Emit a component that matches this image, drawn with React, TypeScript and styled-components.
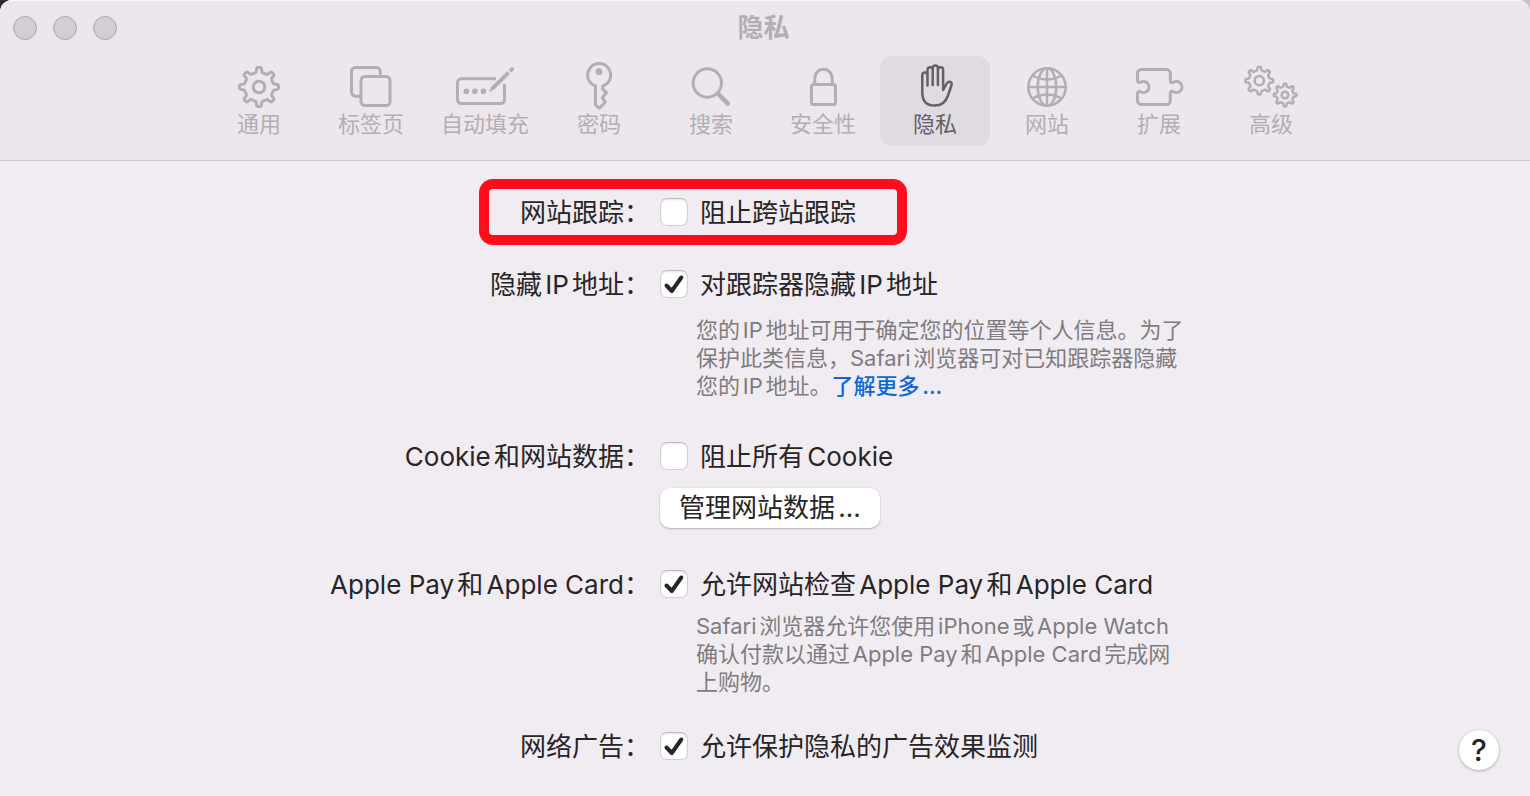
import React from "react";
import styled, { createGlobalStyle } from "styled-components";

const colors = {
  header: "#ece7ed",
  body: "#f1ecf2",
  line: "#cbc7cc",
  dim: "#b3aeb4",
  active: "#636066",
  activeBg: "#dfdbe0",
  text: "#262527",
  note: "#7f7c80",
  link: "#0a68da",
  mark: "#ff0d1b",
};

const GlobalStyle = createGlobalStyle`
  *, *::before, *::after { box-sizing: border-box; }
  body {
    margin: 0;
    background: linear-gradient(90deg, #2b2a2c 20px, #c4c2c5 20px);
    color: ${colors.text};
    font-family: Inter, "Noto Sans CJK SC", sans-serif;
    font-size: 26px;
    line-height: 34px;
    text-autospace: normal;
  }
  button { font: inherit; color: inherit; border: 0; padding: 0; cursor: pointer; }
`;

const Window = styled.div`
  display: flex;
  flex-direction: column;
  min-height: 100vh;
  overflow: hidden;
  border-radius: 12px 12px 0 0;
  background: ${colors.body};
`;

const Header = styled.header`
  display: flex;
  flex-direction: column;
  background: ${colors.header};
  border-bottom: 1px solid ${colors.line};
  box-shadow: inset 0 1px 0 #faf8fa;
  padding-bottom: 14px;
`;

const TitleBar = styled.div`
  display: grid;
  grid-template-columns: 1fr auto 1fr;
  align-items: center;
  height: 56px;
  padding: 0 16px 0 13px;
`;

const Lights = styled.div`
  display: flex;
  gap: 16px;
`;

const Light = styled.button`
  width: 24px;
  height: 24px;
  border: 1px solid #aaa6ab;
  border-radius: 50%;
  background: #d3ced4;
`;

const Title = styled.h1`
  margin: 0;
  font-size: 26px;
  line-height: 32px;
  font-weight: 700;
  color: ${colors.dim};
`;

const Toolbar = styled.nav`
  display: flex;
  justify-content: center;
  gap: 2px;
`;

const Tab = styled.button<{ $active?: boolean; $wide?: boolean }>`
  display: flex;
  flex-direction: column;
  align-items: center;
  width: ${(p) => (p.$wide ? 114 : 110)}px;
  height: 90px;
  padding-top: 4px;
  border-radius: 12px;
  background: ${(p) => (p.$active ? colors.activeBg : "transparent")};
  color: ${(p) => (p.$active ? colors.active : colors.dim)};
`;

const TabLabel = styled.span`
  font-size: 22px;
  line-height: 24px;
`;

const Icon = styled.svg<{ $thin?: boolean }>`
  flex: none;
  width: 60px;
  height: 52px;
  fill: none;
  stroke: currentColor;
  stroke-width: ${(p) => (p.$thin ? 2.5 : 3)};
  stroke-linejoin: round;
  stroke-linecap: round;

  .solid { fill: currentColor; stroke: none; }
`;

const Main = styled.main`
  flex: 1;
  display: grid;
  padding: 35px 31px 26px;
`;

const Form = styled.form`
  grid-area: 1 / 1;
  justify-self: center;
  display: flex;
  flex-direction: column;
`;

const Row = styled.div<{ $gap?: number }>`
  position: relative;
  display: grid;
  grid-template-columns: 320px 540px;
  column-gap: 10px;
  margin-top: ${(p) => p.$gap ?? 0}px;
`;

const RowLabel = styled.span`
  text-align: right;
  white-space: nowrap;
`;

const Check = styled.label`
  display: flex;
  align-items: flex-start;
  gap: 12px;
  white-space: nowrap;
`;

const BoxWrap = styled.span`
  display: grid;
  padding-top: 2px;

  > * { grid-area: 1 / 1; }
`;

const Box = styled.input`
  appearance: none;
  width: 28px;
  height: 28px;
  margin: 0;
  border: 1px solid #d3cfd4;
  border-top-color: #bfbbc0;
  border-radius: 7px;
  background: #fff;
  box-shadow: inset 0 1px 2px #e6e4e7;
`;

const Tick = styled.svg`
  z-index: 1;
  width: 28px;
  height: 28px;
  fill: none;
  stroke: ${colors.text};
  stroke-width: 4px;
  stroke-linecap: round;
  stroke-linejoin: round;
  pointer-events: none;
  visibility: hidden;

  input:checked + & { visibility: visible; }
`;

const Note = styled.p<{ $gap: number }>`
  margin: ${(p) => p.$gap}px 0 0 36px;
  font-size: 22px;
  line-height: 28px;
  color: ${colors.note};
  white-space: nowrap;
`;

const Link = styled.a`
  color: ${colors.link};
  font-weight: 500;
  text-decoration: none;
`;

const PushButton = styled.button`
  height: 40px;
  margin-top: 14px;
  padding: 0 19px;
  border-radius: 10px;
  background: #fff;
  box-shadow: 0 1px 2px #b5b1b6, 0 0 1px #c9c5ca;
  line-height: 38px;
`;

const Highlight = styled.div`
  position: absolute;
  left: 149px;
  top: -17px;
  width: 428px;
  height: 66px;
  border: 10px solid ${colors.mark};
  border-radius: 14px;
  pointer-events: none;
`;

const Help = styled.button`
  grid-area: 1 / 1;
  place-self: end;
  width: 40px;
  height: 40px;
  border-radius: 50%;
  background: #fff;
  box-shadow: 0 1px 3px #b0acb1, 0 0 1px #c9c5ca;
  font-size: 30px;
  line-height: 40px;
  font-weight: 500;
`;

function gearPath(cx: number, cy: number, outer: number, inner: number, teeth: number) {
  const pitch = (Math.PI * 2) / teeth;
  const at = (r: number, turn: number) => {
    const a = turn * pitch;
    return `${(cx + r * Math.sin(a)).toFixed(2)} ${(cy - r * Math.cos(a)).toFixed(2)}`;
  };
  const round = (outer - inner) * 0.45;
  let d = `M${at(inner + round, -0.2)}`;
  for (let i = 0; i < teeth; i++) {
    d += `Q${at(outer, i - 0.17)} ${at(outer, i - 0.08)}L${at(outer, i + 0.08)}`;
    d += `Q${at(outer, i + 0.17)} ${at(inner + round, i + 0.2)}`;
    d += `Q${at(inner, i + 0.24)} ${at(inner, i + 0.36)}`;
    d += `L${at(inner, i + 0.64)}Q${at(inner, i + 0.76)} ${at(inner + round, i + 0.8)}`;
  }
  return d + "Z";
}

const icons = {
  general: (
    <>
      <path d={gearPath(30, 27, 19.5, 14.6, 8)} />
      <circle cx="30" cy="27" r="5.8" />
    </>
  ),
  tabs: (
    <>
      <path strokeLinecap="butt" d="M20 36.2H14.5a4 4 0 0 1-4-4V11.5a4 4 0 0 1 4-4H35.2a4 4 0 0 1 4 4V16" />
      <rect x="20" y="16.5" width="29" height="29" rx="4" />
    </>
  ),
  autofill: (
    <>
      <path strokeLinecap="butt" d="M41 18.8H6.5a4 4 0 0 0-4 4V39.5a4 4 0 0 0 4 4H45.5a4 4 0 0 0 4-4V24" />
      <g className="solid">
        <circle cx="11.3" cy="31.3" r="2.8" />
        <circle cx="19.9" cy="31.3" r="2.8" />
        <circle cx="28.5" cy="31.3" r="2.8" />
        <path d="M34 32L36 27L52.2 11.2L55 14L38.8 29.8Z" />
        <path d="M53.6 9.9L56 7.6Q57.4 6.6 58.6 7.7Q59.6 9 58.5 10.4L56.3 12.6Z" />
      </g>
    </>
  ),
  passwords: (
    <>
      <path d="M26.5 26A11.5 11.5 0 1 1 33.8 26V29.2L37.4 32.6L33.4 37.6L36.2 42.2L30.4 48.2L26.5 45Z" />
      <circle className="solid" cx="30" cy="11.7" r="3.4" />
    </>
  ),
  search: (
    <>
      <circle cx="26.3" cy="23" r="14.2" />
      <path strokeWidth="4.4" d="M38 34.6L46.8 43.6" />
    </>
  ),
  security: (
    <>
      <rect x="18.5" y="24.5" width="24" height="20" rx="2" />
      <path d="M21.8 24V18a8.7 8.7 0 0 1 17.4 0V24" />
    </>
  ),
  privacy: (
    <path d="M22.5 25.5V9.8a2.6 2.6 0 0 1 5.2 0V25M27.7 9.8V8.2a2.6 2.6 0 0 1 5.2 0V25M32.9 9.8a2.6 2.6 0 0 1 5.2 0V30L41.8 23.4Q43.4 21 45.5 21.9Q47.2 23 46.4 25.5L42.8 36Q39.5 45.6 29.8 45.6Q17.3 45.6 17.3 32.5V15.2a2.6 2.6 0 0 1 5.2 0" />
  ),
  websites: (
    <>
      <circle cx="30" cy="27" r="18.7" />
      <ellipse cx="30" cy="27" rx="9.3" ry="18.7" />
      <path d="M30 8.3V45.7M11.3 27H48.7M15.5 15.5Q30 23.5 44.5 15.5M15.5 38.5Q30 30.5 44.5 38.5" />
    </>
  ),
  extensions: (
    <path d="M8.5 20V13.5a4 4 0 0 1 4-4H37.3a4 4 0 0 1 4 4V20.5Q41.4 23.6 44.2 22.4A5.6 5.6 0 1 1 44.2 31.6Q41.4 30.4 41.3 33.5V40.5a4 4 0 0 1-4 4H12.5a4 4 0 0 1-4-4V34Q8.5 30.8 11.2 31.6A5.6 5.6 0 1 0 11.2 22.4Q8.5 23.2 8.5 20Z" />
  ),
  advanced: (
    <>
      <path d={gearPath(18.3, 20.7, 13.9, 10.4, 8)} />
      <circle cx="18.3" cy="20.7" r="4.6" />
      <path d={gearPath(44, 35, 11.4, 8.5, 8)} />
      <circle cx="44" cy="35" r="3.3" />
    </>
  ),
};

const tabs: { id: keyof typeof icons; label: string; wide?: boolean; thin?: boolean }[] = [
  { id: "general", label: "通用" },
  { id: "tabs", label: "标签页" },
  { id: "autofill", label: "自动填充", wide: true },
  { id: "passwords", label: "密码" },
  { id: "search", label: "搜索" },
  { id: "security", label: "安全性" },
  { id: "privacy", label: "隐私", thin: true },
  { id: "websites", label: "网站", thin: true },
  { id: "extensions", label: "扩展" },
  { id: "advanced", label: "高级", thin: true },
];

function CheckBox({ label, checked }: { label: string; checked?: boolean }) {
  return (
    <Check>
      <BoxWrap>
        <Box type="checkbox" defaultChecked={checked} />
        <Tick viewBox="0 0 28 28" aria-hidden="true">
          <path d="M6.5 15.5L11.8 21L21.3 7.5" />
        </Tick>
      </BoxWrap>
      {label}
    </Check>
  );
}

export default function App() {
  return (
    <Window lang="zh-CN">
      <GlobalStyle />
      <Header>
        <TitleBar>
          <Lights>
            <Light type="button" aria-label="关闭" />
            <Light type="button" aria-label="最小化" />
            <Light type="button" aria-label="缩放" />
          </Lights>
          <Title>隐私</Title>
        </TitleBar>
        <Toolbar>
          {tabs.map((t) => (
            <Tab key={t.id} type="button" $wide={t.wide} $active={t.id === "privacy"}>
              <Icon viewBox="0 0 60 52" aria-hidden="true" $thin={t.thin}>
                {icons[t.id]}
              </Icon>
              <TabLabel>{t.label}</TabLabel>
            </Tab>
          ))}
        </Toolbar>
      </Header>
      <Main>
        <Form>
          <Row>
            <RowLabel>网站跟踪：</RowLabel>
            <CheckBox label="阻止跨站跟踪" />
            <Highlight />
          </Row>
          <Row $gap={38}>
            <RowLabel>隐藏IP地址：</RowLabel>
            <div>
              <CheckBox label="对跟踪器隐藏IP地址" checked />
              <Note $gap={14}>
                您的IP地址可用于确定您的位置等个人信息。为了
                <br />
                保护此类信息，Safari浏览器可对已知跟踪器隐藏
                <br />
                您的IP地址。<Link href="#more">了解更多...</Link>
              </Note>
            </div>
          </Row>
          <Row $gap={40}>
            <RowLabel>Cookie和网站数据：</RowLabel>
            <div>
              <CheckBox label="阻止所有Cookie" />
              <PushButton type="button">管理网站数据...</PushButton>
            </div>
          </Row>
          <Row $gap={40}>
            <RowLabel>Apple Pay和Apple Card：</RowLabel>
            <div>
              <CheckBox label="允许网站检查Apple Pay和Apple Card" checked />
              <Note $gap={10}>
                Safari浏览器允许您使用iPhone或Apple Watch
                <br />
                确认付款以通过Apple Pay和Apple Card完成网
                <br />
                上购物。
              </Note>
            </div>
          </Row>
          <Row $gap={34}>
            <RowLabel>网络广告：</RowLabel>
            <CheckBox label="允许保护隐私的广告效果监测" checked />
          </Row>
        </Form>
        <Help type="button" aria-label="帮助">?</Help>
      </Main>
    </Window>
  );
}
